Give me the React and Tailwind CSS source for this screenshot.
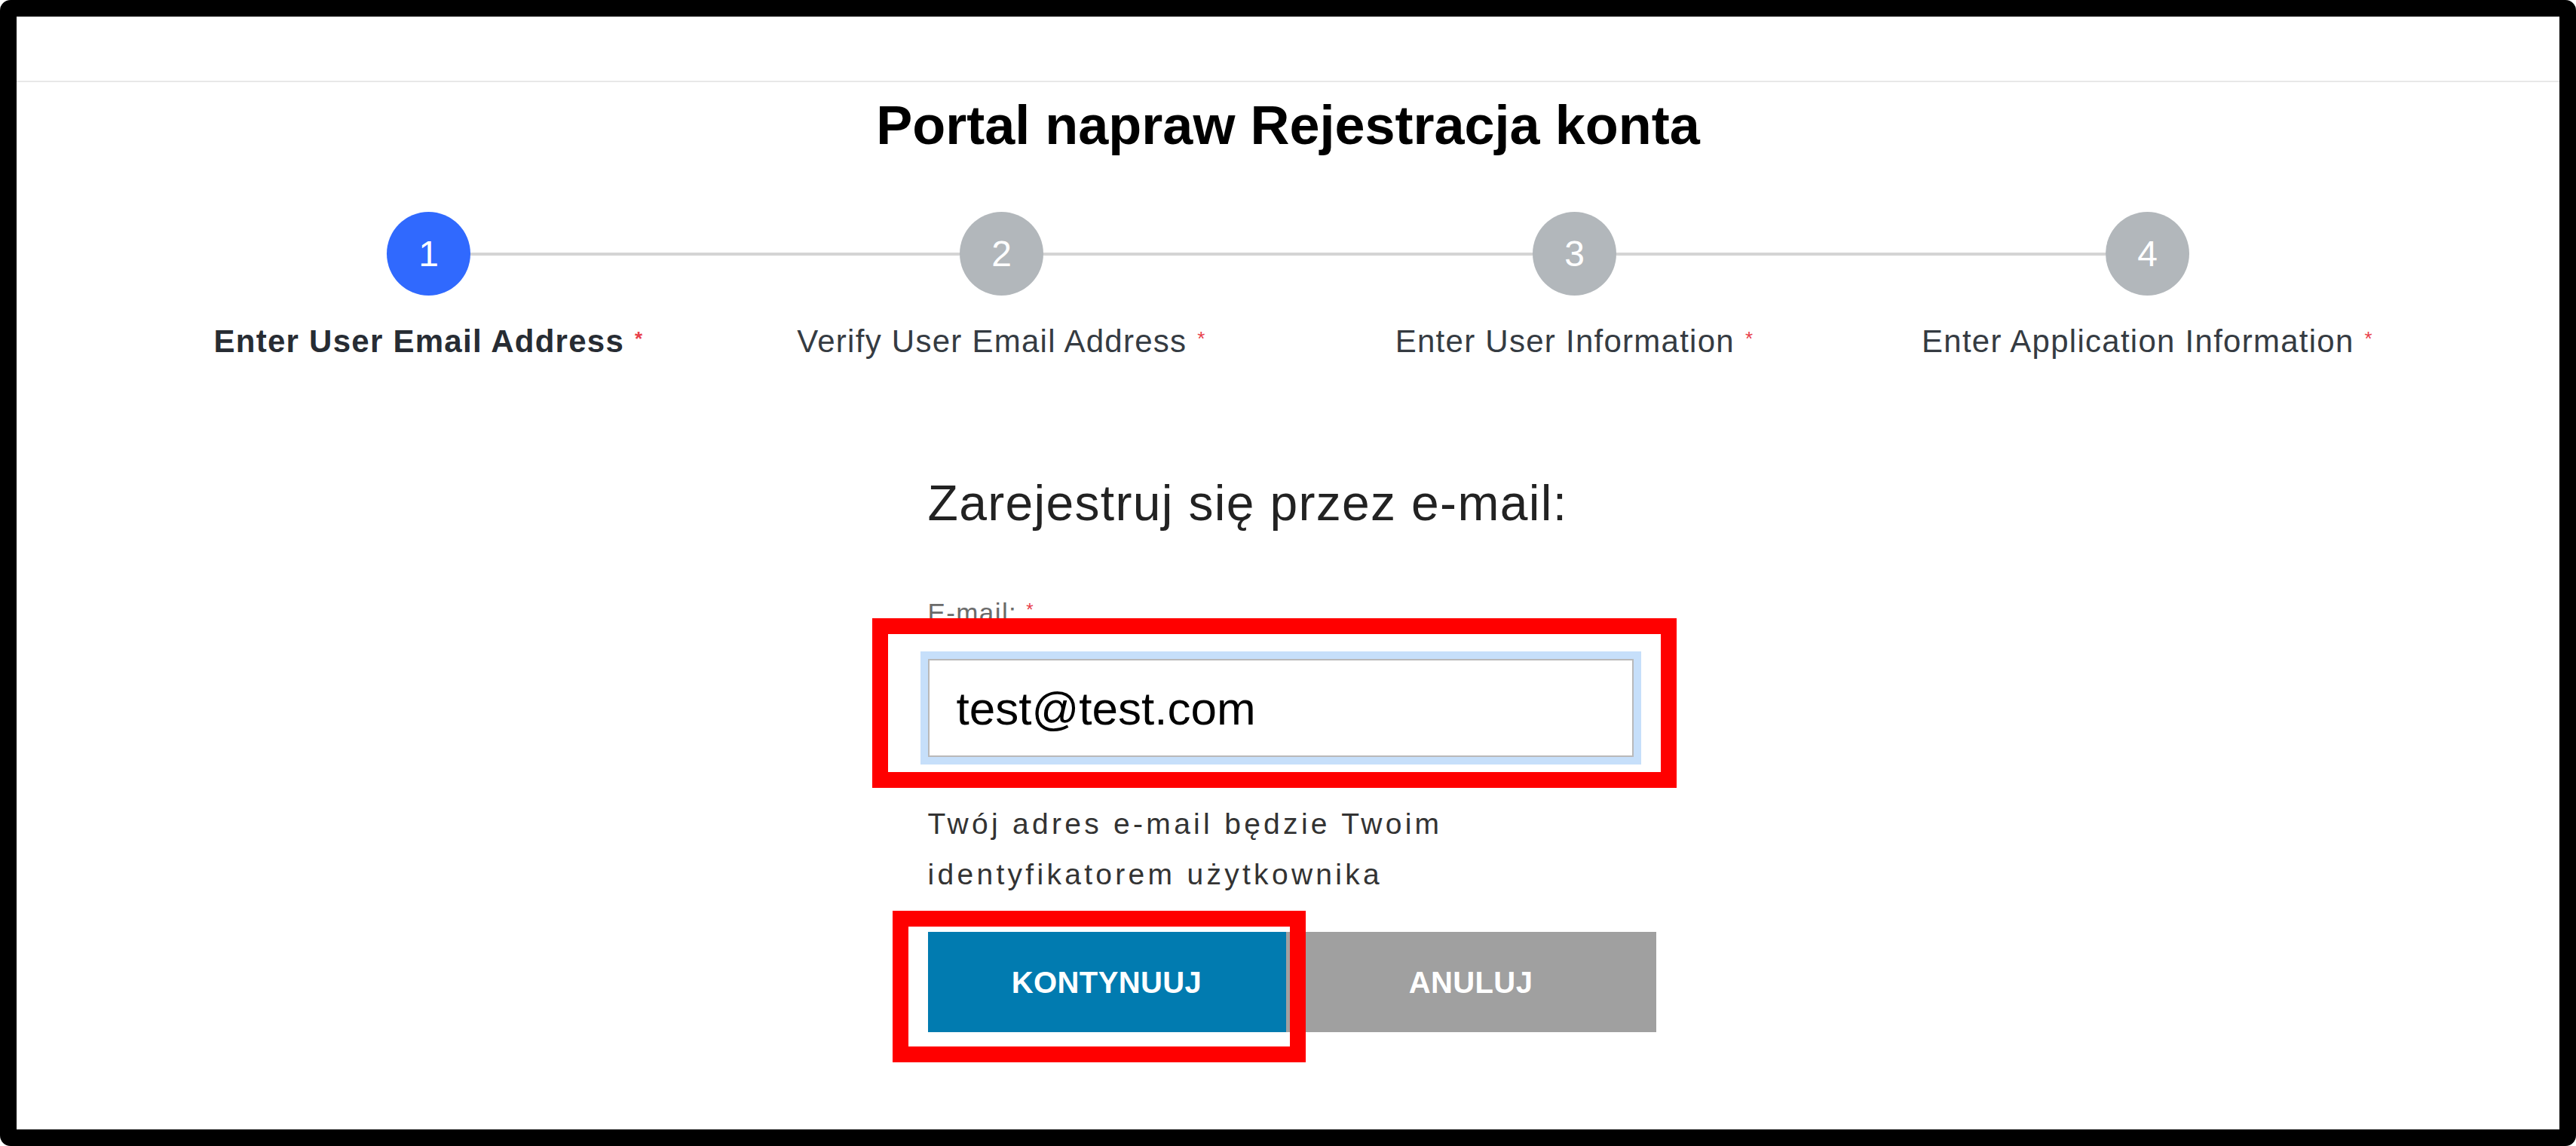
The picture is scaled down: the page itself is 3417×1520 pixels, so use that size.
import React from "react";

const steps = [
  { n: 1, label: "Enter User Email Address", active: true },
  { n: 2, label: "Verify User Email Address" },
  { n: 3, label: "Enter User Information" },
  { n: 4, label: "Enter Application Information" },
];

function Step({ step, first, last }) {
  return (
    <div className="flex flex-col items-center">
      <div className="flex items-center w-full">
        <div className={"flex-1 h-[4px] " + (first ? "bg-transparent" : "bg-[#d4d4d4]")} />
        <div
          className={
            "w-[111px] h-[111px] rounded-full flex items-center justify-center text-white text-[48px] leading-none " +
            (step.active ? "bg-[#3069fe]" : "bg-[#b2b7bb]")
          }
        >
          {step.n}
        </div>
        <div className={"flex-1 h-[4px] " + (last ? "bg-transparent" : "bg-[#d4d4d4]")} />
      </div>
      <div
        className={
          "mt-[40px] flex items-start text-[42px] leading-none tracking-[0.03em] " +
          (step.active ? "font-bold text-[#272c33]" : "text-[#353b42]")
        }
      >
        <span>{step.label}</span>
        <span className="ml-[14px] text-[26px] text-[#e8404a] leading-none mt-[4px]">*</span>
      </div>
    </div>
  );
}

export default function App() {
  return (
    <div className="w-full h-[1520px] bg-white border-[22px] border-black rounded-[14px] overflow-hidden font-['Liberation_Sans',Arial,sans-serif]">
      <div className="h-[87px] border-b-2 border-[#e8e8e8]" />

      <h1 className="mt-[21px] text-center text-[72px] leading-none font-bold text-black">
        Portal napraw Rejestracja konta
      </h1>

      <div className="w-[3040px] mx-auto mt-[79px] grid grid-cols-4">
        {steps.map((s, i) => (
          <Step key={s.n} step={s} first={i === 0} last={i === steps.length - 1} />
        ))}
      </div>

      <div className="w-[976px] mx-auto pl-[10px] mt-[160px]">
        <h2 className="text-[66px] leading-none tracking-[0.02em] text-[#222]">
          Zarejestruj się przez e-mail:
        </h2>

        <div className="mt-[95px] text-[35px] leading-none tracking-[0.04em] text-[#6b6b6b] flex items-start">
          <span>E-mail:</span>
          <span className="ml-[12px] text-[24px] text-[#e8404a] mt-[2px]">*</span>
        </div>

        <div className="relative mt-[44px] w-[936px]">
          <input
            type="email"
            readOnly
            defaultValue="test@test.com"
            className="w-[936px] h-[130px] border-2 border-[#b9b9b9] bg-white shadow-[0_0_0_10px_#c6dffa] px-[36px] text-[62px] text-black outline-none font-['Liberation_Sans',Arial,sans-serif]"
          />
          <div className="absolute left-[-74px] top-[-54px] w-[1067px] h-[225px] border-[21px] border-[#ff0000] pointer-events-none" />
        </div>

        <p className="mt-[55px] text-[39px] leading-[67px] tracking-[0.11em] text-[#333]">
          Twój adres e-mail będzie Twoim
          <br />
          identyfikatorem użytkownika
        </p>

        <div className="mt-[43px] flex">
          <div className="relative">
            <button className="w-[475px] h-[133px] bg-[#017bb0] text-white font-bold text-[40px] tracking-[0.01em]">
              KONTYNUUJ
            </button>
            <div className="absolute left-[-47px] top-[-28px] w-[548px] h-[201px] border-[21px] border-[#ff0000] pointer-events-none" />
          </div>
          <button className="w-[492px] h-[133px] bg-[#a0a0a0] text-white font-bold text-[40px] tracking-[0.01em]">
            ANULUJ
          </button>
        </div>
      </div>
    </div>
  );
}
